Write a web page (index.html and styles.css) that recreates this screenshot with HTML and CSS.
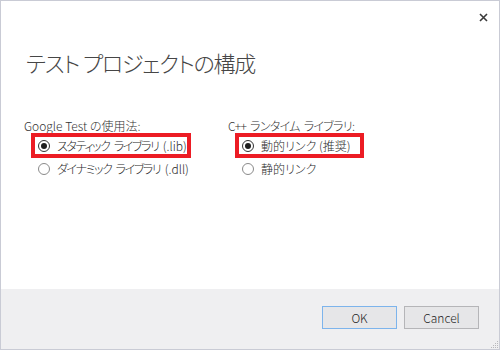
FILE: index.html
```html
<!DOCTYPE html>
<html lang="ja">
<head>
<meta charset="utf-8">
<link rel="stylesheet" href="styles.css">
</head>
<body>
<div class="dialog">
  <div class="content">
    <div class="header">
      <button class="close" aria-label="閉じる">
        <svg width="9" height="9" viewBox="0 0 9 9"><path d="M1 1 L8 8 M8 1 L1 8" stroke="#3a3a3a" stroke-width="1.6" fill="none"/></svg>
      </button>
    </div>
    <h1 class="title">テスト プロジェクトの構成</h1>
    <div class="options">
      <div class="group">
        <div class="group-label">Google Test の使用法:</div>
        <div class="row hl"><span class="radio checked"></span><span class="kana">スタティック ライブラリ <span class="latin">(.lib)</span></span></div>
        <div class="row"><span class="radio"></span><span class="kana">ダイナミック ライブラリ <span class="latin">(.dll)</span></span></div>
      </div>
      <div class="group">
        <div class="group-label kana-label">C++ ランタイム ライブラリ:</div>
        <div class="row hl"><span class="radio checked"></span><span>動的リンク (推奨)</span></div>
        <div class="row"><span class="radio"></span><span>静的リンク</span></div>
      </div>
    </div>
  </div>
  <div class="footer">
    <button class="btn default">OK</button>
    <button class="btn">Cancel</button>
    <svg class="grip" width="10" height="10" viewBox="0 0 10 10">
      <rect x="8" y="2" width="1" height="1" fill="#b8b8bc"/>
      <rect x="6" y="4" width="1" height="1" fill="#b8b8bc"/>
      <rect x="8" y="4" width="1" height="1" fill="#b8b8bc"/>
      <rect x="4" y="6" width="1" height="1" fill="#b8b8bc"/>
      <rect x="6" y="6" width="1" height="1" fill="#b8b8bc"/>
      <rect x="8" y="6" width="1" height="1" fill="#b8b8bc"/>
      <rect x="2" y="8" width="1" height="1" fill="#b8b8bc"/>
      <rect x="4" y="8" width="1" height="1" fill="#b8b8bc"/>
      <rect x="6" y="8" width="1" height="1" fill="#b8b8bc"/>
      <rect x="8" y="8" width="1" height="1" fill="#b8b8bc"/>
    </svg>
  </div>
</div>
</body>
</html>
```

FILE: styles.css
```css
html, body {
  margin: 0;
  padding: 0;
  background: #ffffff;
}

body {
  font-family: "Noto Sans CJK JP", "Noto Sans", sans-serif;
  font-size: 12px;
  font-weight: 300;
  font-feature-settings: "palt";
  color: #2a2a2a;
}

.dialog {
  width: 500px;
  height: 350px;
  box-sizing: border-box;
  border: 1px solid #c9cbd5;
  display: flex;
  flex-direction: column;
  position: relative;
  background: #ffffff;
}

.content {
  flex: 1;
  display: flex;
  flex-direction: column;
}

.header {
  display: flex;
  justify-content: flex-end;
  padding: 8px 8px 0 0;
  height: 16px;
}

.close {
  width: 16px;
  height: 16px;
  padding: 0;
  border: none;
  background: transparent;
  display: flex;
  align-items: center;
  justify-content: center;
}

.title {
  margin: 22px 0 0 25px;
  font-size: 22px;
  font-weight: 300;
  letter-spacing: -1.2px;
  line-height: 30px;
  color: #464646;
}

.options {
  margin-top: 41px;
  padding-left: 23px;
  display: grid;
  grid-template-columns: 204px 1fr;
}

.group {
  display: flex;
  flex-direction: column;
  align-items: flex-start;
  white-space: nowrap;
}

.group-label {
  line-height: 16px;
  color: #333;
}

.kana-label {
  letter-spacing: -0.7px;
  word-spacing: 2px;
}

.row {
  display: flex;
  align-items: center;
  height: 23px;
  margin-left: 8px;
  padding: 0 3px 0 6px;
  gap: 7px;
  color: #2a2a2a;
}

.kana {
  letter-spacing: -1.4px;
  word-spacing: 3px;
}

.latin {
  letter-spacing: 0;
}

.group:nth-child(2) .row {
  margin-left: 8px;
  padding-right: 13px;
}

.hl {
  outline: 4px solid #ec1c24;
  outline-offset: -3px;
}

.radio {
  width: 12px;
  height: 12px;
  box-sizing: border-box;
  border: 1px solid #8a8a8a;
  border-radius: 50%;
  background: #fff;
  display: flex;
  align-items: center;
  justify-content: center;
  flex: none;
}

.radio.checked {
  border-color: #333;
}

.radio.checked::after {
  content: "";
  width: 6px;
  height: 6px;
  border-radius: 50%;
  background: #1e1e1e;
}

.footer {
  height: 60px;
  box-sizing: border-box;
  background: #efeff1;
  display: flex;
  justify-content: flex-end;
  align-items: flex-start;
  gap: 7px;
  padding: 17px 20px 0 0;
}

.btn {
  width: 75px;
  height: 23px;
  box-sizing: border-box;
  border: 1px solid #b5b5b8;
  background: #e6e6e8;
  font-family: "Noto Sans CJK JP", "Noto Sans", sans-serif;
  font-size: 12px;
  font-weight: 300;
  color: #1e1e1e;
  padding: 0;
  line-height: 20px;
}

.btn.default {
  border-color: #7db4ec;
}

.grip {
  position: absolute;
  right: 0;
  bottom: 0;
}
```
